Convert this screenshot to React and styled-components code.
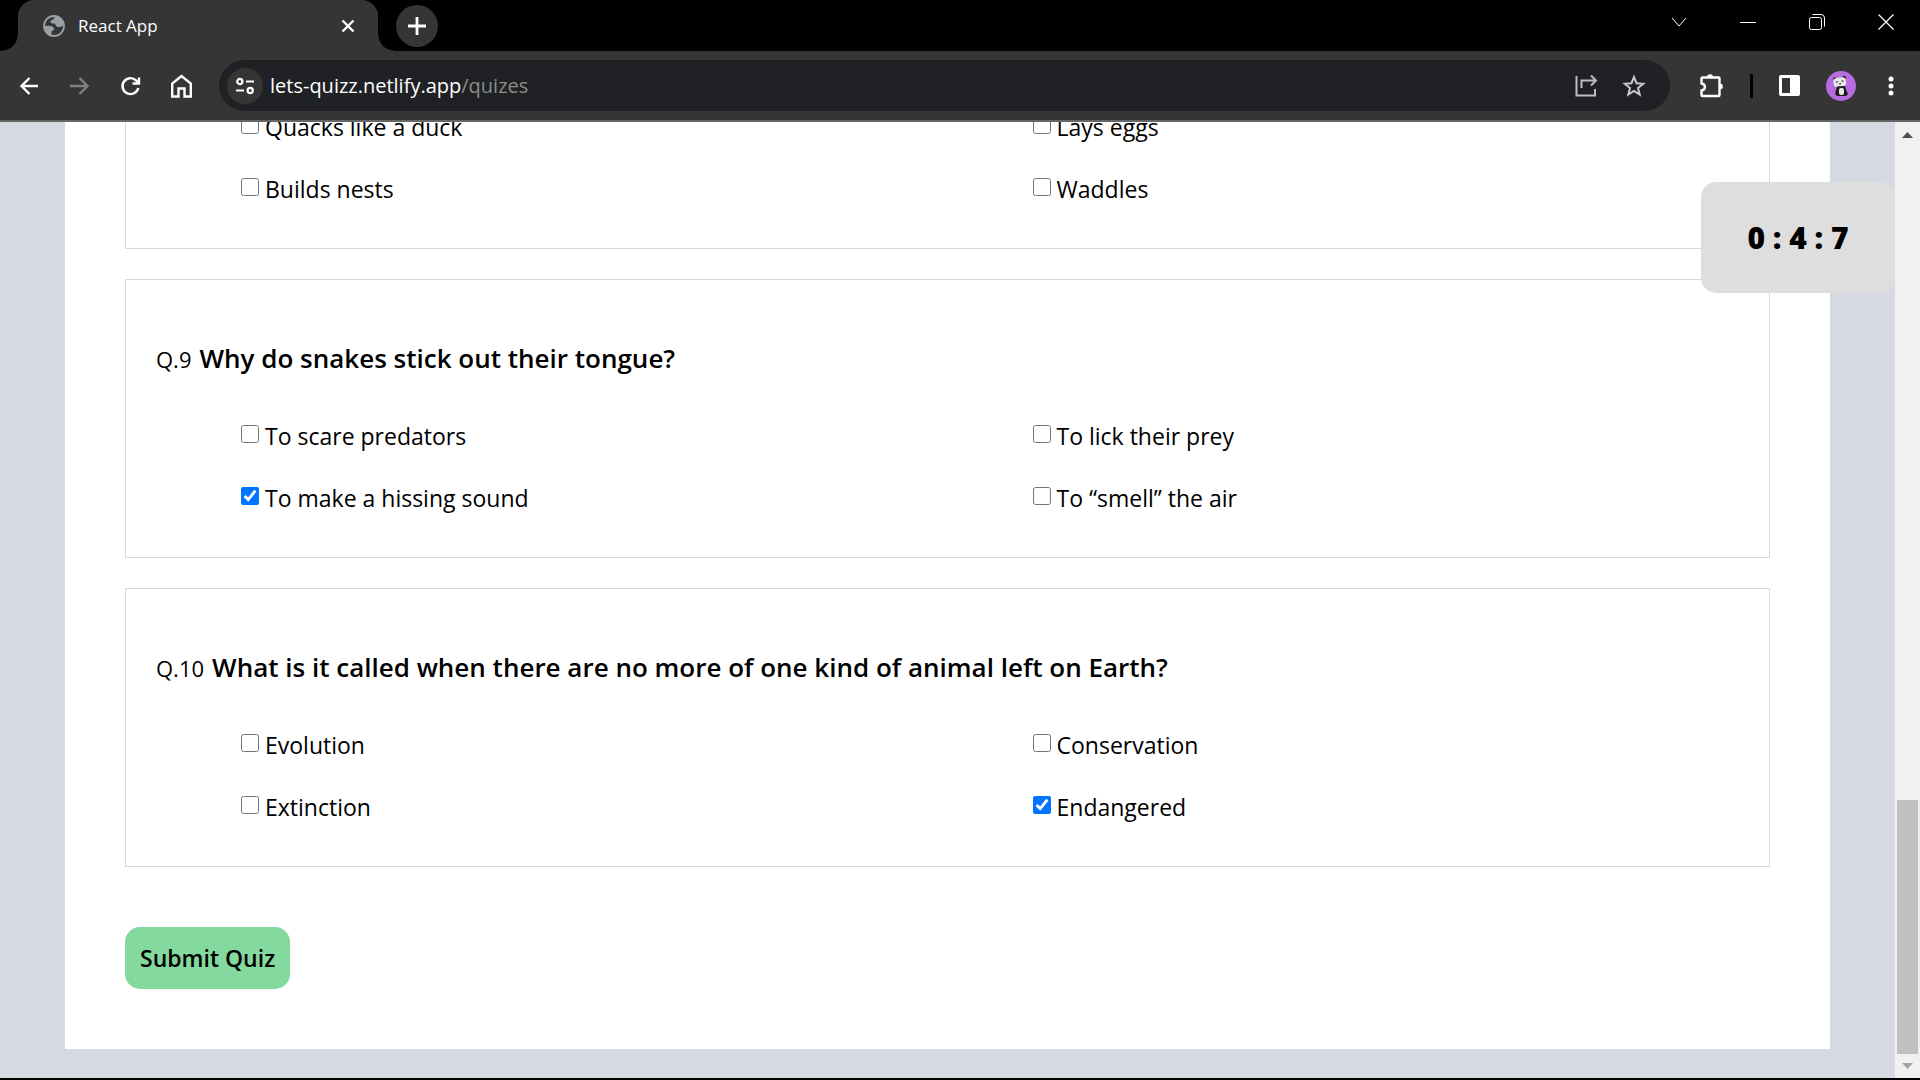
import React, { useState } from 'react';
import styled, { createGlobalStyle } from 'styled-components';

const Global = createGlobalStyle`
  *, *::before, *::after { box-sizing: border-box; }
  body { margin: 0; background: #000; color: #000; font-family: "Open Sans", "Noto Sans", sans-serif; }
  button, input { font: inherit; color: inherit; }
  button { padding: 0; border: 0; background: none; cursor: pointer; }
  svg { display: block; }
`;

const Window = styled.div`
  display: flex;
  flex-direction: column;
  height: 100vh;
  border-bottom: 2px solid #000;
`;

const TabStrip = styled.header`
  flex: none;
  display: flex;
  align-items: stretch;
  height: 51px;
  padding-left: 18px;
  background: #000;
`;

const Tab = styled.div`
  position: relative;
  display: flex;
  align-items: center;
  width: 360px;
  padding: 0 22px 0 25px;
  border-radius: 16px 16px 0 0;
  background: #353535;
  color: #fff;
  font-size: 17px;
  &::before, &::after {
    content: '';
    position: absolute;
    bottom: 0;
    width: 16px;
    height: 16px;
  }
  &::before { right: 100%; background: radial-gradient(circle at 0 0, transparent 15px, #353535 16px); }
  &::after { left: 100%; background: radial-gradient(circle at 100% 0, transparent 15px, #353535 16px); }
`;

const TabTitle = styled.span`
  flex: 1;
  padding-left: 13px;
`;

const NewTab = styled.button`
  display: grid;
  place-items: center;
  align-self: center;
  width: 42px;
  height: 42px;
  margin-left: 18px;
  border-radius: 50%;
  background: #353535;
`;

const WindowControls = styled.div`
  display: flex;
  gap: 53px;
  align-items: center;
  height: 43px;
  margin-left: auto;
  padding-right: 26px;
`;

const Toolbar = styled.nav`
  flex: none;
  display: flex;
  align-items: center;
  height: 71px;
  padding: 0 20px 0 16px;
  border-bottom: 2px solid #666;
  background: #353535;
`;

const NavButtons = styled.div`
  display: flex;
  gap: 25px;
  margin-right: 24px;
`;

const IconButton = styled.button`
  display: grid;
  place-items: center;
`;

const MenuButton = styled(IconButton)`
  width: 18px;
`;

const AddressBar = styled.div`
  flex: 1;
  display: flex;
  align-items: center;
  height: 51px;
  padding: 0 24px 0 8px;
  border-radius: 26px;
  background: #202124;
`;

const SiteInfo = styled.button`
  display: grid;
  place-items: center;
  width: 36px;
  height: 36px;
  border-radius: 50%;
  background: #353535;
`;

const Url = styled.a`
  flex: 1;
  padding-left: 7px;
  color: #fff;
  font-size: 20px;
  text-decoration: none;
`;

const Path = styled.span`
  color: #8c8c8c;
`;

const AddressActions = styled.div`
  display: flex;
  gap: 24px;
`;

const Extras = styled.div`
  display: flex;
  align-items: center;
  gap: 26px;
  padding-left: 28px;
`;

const Divider = styled.span`
  width: 3px;
  height: 24px;
  background: #000;
`;

const Body = styled.div`
  flex: 1;
  display: flex;
  min-height: 0;
`;

const Viewport = styled.main`
  position: relative;
  flex: 1;
  display: flex;
  flex-direction: column;
  justify-content: flex-end;
  overflow: hidden;
  padding: 0 65px 29px;
  background: #d5d9e2;
`;

const Sheet = styled.form`
  display: flex;
  flex-direction: column;
  gap: 30px;
  padding: 0 60px 60px;
  background: #fff;
`;

const Question = styled.fieldset`
  min-width: 0;
  margin: 0;
  padding: ${(p) => (p.$cut ? '0' : '59px')} 30px 28px;
  border: 1px solid #cfdbe5;
`;

const Heading = styled.div`
  display: flex;
  align-items: baseline;
  gap: 8px;
  height: 38px;
  margin-bottom: 28px;
  line-height: 38px;
`;

const Number = styled.span`
  font-size: 22px;
`;

const Title = styled.h2`
  margin: 0;
  font-size: 26px;
  font-weight: 600;
`;

const Options = styled.div`
  display: grid;
  grid-template-columns: 1fr 1fr;
`;

const Option = styled.label`
  display: flex;
  align-items: center;
  gap: 6px;
  height: 62px;
  padding-left: 85px;
  font-size: 23px;
`;

const Check = styled.input`
  width: 18px;
  height: 18px;
  margin: 0 0 4px;
`;

const Submit = styled.button`
  align-self: flex-start;
  height: 62px;
  margin-top: 30px;
  padding: 0 15px;
  border-radius: 15px;
  background: #83d99e;
  font-size: 23px;
  font-weight: 600;
`;

const Timer = styled.div`
  position: absolute;
  top: 60px;
  right: 0;
  display: grid;
  place-items: center;
  width: 194px;
  height: 111px;
  border-radius: 15px;
  background: #dedede;
  font-size: 30px;
  font-weight: 800;
`;

const Scrollbar = styled.div`
  flex: none;
  display: flex;
  flex-direction: column;
  align-items: center;
  justify-content: space-between;
  width: 25px;
  padding: 10px 0 9px;
  background: #f1f1f1;
`;

const Thumb = styled.div`
  width: 21px;
  height: 254px;
  margin: auto 0 9px;
  background: #c1c1c1;
`;

const questions = [
  { id: 8, options: ['Quacks like a duck', 'Lays eggs', 'Builds nests', 'Waddles'] },
  {
    id: 9,
    title: 'Why do snakes stick out their tongue?',
    options: ['To scare predators', 'To lick their prey', 'To make a hissing sound', 'To “smell” the air'],
    picked: 2,
  },
  {
    id: 10,
    title: 'What is it called when there are no more of one kind of animal left on Earth?',
    options: ['Evolution', 'Conservation', 'Extinction', 'Endangered'],
    picked: 3,
  },
];

function QuestionCard({ id, title, options, picked }) {
  const [checked, setChecked] = useState(options.map((_, i) => i === picked));
  const toggle = (i) => setChecked(checked.map((c, j) => (j === i ? !c : c)));
  return (
    <Question $cut={!title}>
      {title && (
        <Heading>
          <Number>Q.{id}</Number>
          <Title>{title}</Title>
        </Heading>
      )}
      <Options>
        {options.map((text, i) => (
          <Option key={text}>
            <Check type="checkbox" checked={checked[i]} onChange={() => toggle(i)} />
            {text}
          </Option>
        ))}
      </Options>
    </Question>
  );
}

function Icon({ w = 26, h = w, color = '#fff', stroke = 2.4, children }) {
  return (
    <svg width={w} height={h} viewBox={`0 0 ${w} ${h}`} fill="none" stroke={color} strokeWidth={stroke}>
      {children}
    </svg>
  );
}

const Globe = () => (
  <svg width="22" height="22" viewBox="0 0 22 22">
    <circle cx="11" cy="11" r="10" fill="none" stroke="#9aa0a6" strokeWidth="1.8" />
    <path d="M1.500 11C6 10.500 10 10.500 11 13.500c.4 1.500-.5 2.500-2.500 2.500v4.500C4 20 1.500 15.500 1.500 11z" fill="#9aa0a6" />
    <path d="M12 1.500c-1 1.500-.5 2.500-2 3S7.500 5.500 7.500 7 9 8.500 11 8.500s1.500 3.500 4 3.500 4.500-.5 5.500-2C20.500 5 16 1 12 1.500z" fill="#9aa0a6" />
  </svg>
);

const Panda = () => (
  <svg width="30" height="30" viewBox="0 0 30 30">
    <circle cx="15" cy="15" r="15" fill="#b76be0" />
    <circle cx="8.800" cy="8" r="1.800" fill="#222" />
    <circle cx="18.200" cy="6.500" r="1.800" fill="#222" />
    <rect x="7.500" y="6.500" width="12.500" height="9" rx="3.500" fill="#e8e8e8" transform="rotate(-8 14 11)" />
    <path d="M10 11.500l2-1M15.500 9.800l2 .6M13 13l2-.4" stroke="#333" strokeWidth="1.100" />
    <path d="M11 15.500l8-.5 1.500 5 1.500 3-2 2h-9l-2-2z" fill="#1c1c1c" />
    <rect x="13" y="17" width="5" height="7" rx="2" fill="#e8e8e8" />
  </svg>
);

export default function App() {
  return (
    <Window>
      <Global />
      <TabStrip>
        <Tab>
          <Globe />
          <TabTitle>React App</TabTitle>
          <IconButton aria-label="Close tab">
            <Icon w={16}><path d="M2.500 2.500l11 11M13.500 2.500l-11 11" /></Icon>
          </IconButton>
        </Tab>
        <NewTab aria-label="New tab">
          <Icon w={18} stroke={2.8}><path d="M9 0v18M0 9h18" /></Icon>
        </NewTab>
        <WindowControls>
          <IconButton aria-label="Search tabs"><Icon w={16} stroke={1}><path d="M1 4l7 8 7-8" /></Icon></IconButton>
          <IconButton aria-label="Minimize"><Icon w={16} stroke={1}><path d="M0 8.500h16" /></Icon></IconButton>
          <IconButton aria-label="Restore">
            <Icon w={16} stroke={1}><rect x="0.500" y="3.500" width="12" height="12" rx="2" /><path d="M3.500.5H12a3.500 3.500 0 0 1 3.500 3.500v8.500" /></Icon>
          </IconButton>
          <IconButton aria-label="Close"><Icon w={16} stroke={1.2}><path d="M.5.5l15 15M15.500.5l-15 15" /></Icon></IconButton>
        </WindowControls>
      </TabStrip>
      <Toolbar>
        <NavButtons>
          <IconButton aria-label="Back"><Icon><path d="M22 13H6M13.500 5L5.500 13l8 8" /></Icon></IconButton>
          <IconButton aria-label="Forward"><Icon color="#808080"><path d="M3 13h17M12.500 5l8 8-8 8" /></Icon></IconButton>
          <IconButton aria-label="Reload"><Icon><path d="M20.300 15A8 8 0 1 1 18 7.300l2.500 2.500M21 4.500v6h-6.500" /></Icon></IconButton>
          <IconButton aria-label="Home"><Icon><path d="M3.200 23.500V10.500L12.500 3l9.300 7.500v13h-6.300v-8h-6v8z" /></Icon></IconButton>
        </NavButtons>
        <AddressBar>
          <SiteInfo aria-label="Site information">
            <Icon w={18} stroke={2.2}><circle cx="3.800" cy="4.500" r="2.600" /><path d="M10 4.500h8M0 13.500h8" /><circle cx="14.200" cy="13.500" r="2.600" /></Icon>
          </SiteInfo>
          <Url href="#quizes">lets-quizz.netlify.app<Path>/quizes</Path></Url>
          <AddressActions>
            <IconButton aria-label="Share">
              <Icon w={24} color="#bdbdbd" stroke={2}><path d="M2.500 2v19.500h18.500V15M7.500 14V6.500h14M17 1.500l5 5-5 5" /></Icon>
            </IconButton>
            <IconButton aria-label="Bookmark">
              <Icon w={24} color="#c8c8c8" stroke={2}><path d="M12 3l2.500 6.200 6.700.5-5.200 4.300 1.700 6.500L12 17l-5.700 3.500L8 14 2.800 9.700l6.700-.5z" /></Icon>
            </IconButton>
          </AddressActions>
        </AddressBar>
        <Extras>
          <IconButton aria-label="Extensions">
            <Icon w={26}>
              <path d="M4.500 4.500h16a1 1 0 0 1 1 1v16.500a1 1 0 0 1-1 1h-16a1 1 0 0 1-1-1v-4.500c4.500-.5 4.500-6.500 0-7V5.500a1 1 0 0 1 1-1z" />
              <path d="M9 4a3 2.800 0 0 1 6 0zM22 10.500a2.800 3 0 0 1 0 6z" fill="#fff" stroke="none" />
            </Icon>
          </IconButton>
          <Divider />
          <IconButton aria-label="Side panel">
            <Icon w={21}><rect width="21" height="21" rx="2" fill="#fff" stroke="none" /><rect x="3" y="3" width="8" height="15" fill="#353535" stroke="none" /></Icon>
          </IconButton>
          <IconButton aria-label="Profile"><Panda /></IconButton>
          <MenuButton aria-label="Menu">
            <Icon w={6} h={20}><g fill="#fff" stroke="none"><circle cx="3" cy="3" r="2.500" /><circle cx="3" cy="10" r="2.500" /><circle cx="3" cy="17" r="2.500" /></g></Icon>
          </MenuButton>
        </Extras>
      </Toolbar>
      <Body>
        <Viewport>
          <Sheet onSubmit={(e) => e.preventDefault()}>
            {questions.map((q) => <QuestionCard key={q.id} {...q} />)}
            <Submit type="submit">Submit Quiz</Submit>
          </Sheet>
          <Timer>0 : 4 : 7</Timer>
        </Viewport>
        <Scrollbar>
          <svg width="11" height="6" fill="#505050"><path d="M0 6L5.500 0 11 6z" /></svg>
          <Thumb />
          <svg width="11" height="6" fill="#a3a3a3"><path d="M0 0l5.500 6L11 0z" /></svg>
        </Scrollbar>
      </Body>
    </Window>
  );
}
